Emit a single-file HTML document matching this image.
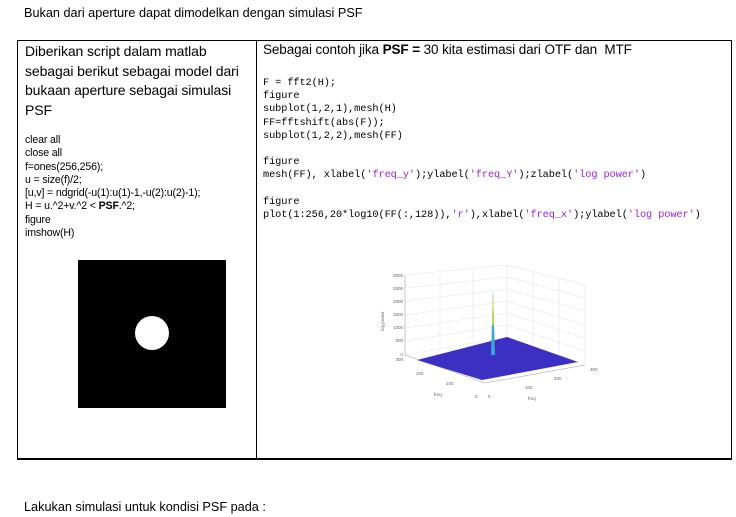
<!DOCTYPE html>
<html><head><meta charset="utf-8"><style>
body{margin:0;width:736px;height:517px;background:#fff;position:relative;font-family:"Liberation Sans",sans-serif;color:#000;overflow:hidden}
.a{position:absolute;white-space:nowrap}
.t{position:absolute;left:17px;top:40px;width:715px;height:420px;border:1px solid #000;box-sizing:border-box;border-bottom-width:2px}
.d{position:absolute;left:256px;top:40px;width:1px;height:420px;background:#000}
.m{font-family:"Liberation Mono",monospace;font-size:10.3px;line-height:13.2px;letter-spacing:-0.1px}
.s{color:#a020f0}
</style></head><body>
<div class="a" style="left:24px;top:6px;font-size:12.7px">Bukan dari aperture dapat dimodelkan dengan simulasi PSF</div>
<div class="t"></div><div class="d"></div>
<div class="a" style="left:25px;top:42px;font-size:14px;line-height:19.5px;letter-spacing:-0.1px">Diberikan script dalam matlab<br>sebagai berikut sebagai model dari<br>bukaan aperture sebagai simulasi<br>PSF</div>
<div class="a" style="left:25px;top:134px;font-size:10.6px;line-height:13.3px;letter-spacing:-0.15px">clear all<br>close all<br>f=ones(256,256);<br>u = size(f)/2;<br>[u,v] = ndgrid(-u(1):u(1)-1,-u(2):u(2)-1);<br>H = u.^2+v.^2 &lt; <b>PSF</b>.^2;<br>figure<br>imshow(H)</div>
<div class="a" style="left:78px;top:260px;width:148px;height:148px;background:#000"></div>
<div class="a" style="left:135px;top:316px;width:34px;height:34px;border-radius:50%;background:#fff"></div>
<div class="a" style="left:263px;top:42px;font-size:13.5px;letter-spacing:-0.1px">Sebagai contoh jika <b>PSF =</b> 30 kita estimasi dari OTF dan &nbsp;MTF</div>
<div class="a m" style="left:263px;top:77px">F = fft2(H);<br>figure<br>subplot(1,2,1),mesh(H)<br>FF=fftshift(abs(F));<br>subplot(1,2,2),mesh(FF)<br><br>figure<br>mesh(FF), xlabel(<span class="s">'freq_y'</span>);ylabel(<span class="s">'freq_Y'</span>);zlabel(<span class="s">'log power'</span>)<br><br>figure<br>plot(1:256,20*log10(FF(:,128)),<span class="s">'r'</span>),xlabel(<span class="s">'freq_x'</span>);ylabel(<span class="s">'log power'</span>)</div>
<svg class="a" style="left:360px;top:265px" width="250" height="150" font-family="Liberation Sans" font-size="4.5" fill="#666">
<g stroke="#e4e4e4" stroke-width="0.6" fill="none">
<polyline points="45,10 147,0 225,20 225,100 147,72 45,90 45,10"/>
<line x1="147" y1="0" x2="147" y2="72"/>
<line x1="80" y1="7" x2="80" y2="86"/><line x1="113" y1="3" x2="113" y2="78"/>
<line x1="173" y1="7" x2="173" y2="82"/><line x1="199" y1="14" x2="199" y2="91"/>
<line x1="45" y1="23" x2="147" y2="12"/><line x1="45" y1="36" x2="147" y2="24"/><line x1="45" y1="50" x2="147" y2="36"/><line x1="45" y1="63" x2="147" y2="48"/><line x1="45" y1="76" x2="147" y2="60"/>
<line x1="147" y1="12" x2="225" y2="33"/><line x1="147" y1="24" x2="225" y2="46"/><line x1="147" y1="36" x2="225" y2="60"/><line x1="147" y1="48" x2="225" y2="73"/><line x1="147" y1="60" x2="225" y2="86"/>
</g>
<g stroke="#999" stroke-width="0.5"><line x1="45" y1="10" x2="45" y2="90"/><line x1="45" y1="90" x2="125" y2="118"/><line x1="125" y1="118" x2="225" y2="100"/></g>
<polygon points="57,95 147,72 218,97 122,115" fill="#3b2fc4"/>
<polygon points="131,90 133,25 135,90" fill="#3aa7d8"/>
<polygon points="132,60 133,25 134,60" fill="#c8dc3a"/>
<g text-anchor="end"><text x="43" y="12">3000</text><text x="43" y="25">2500</text><text x="43" y="38">2000</text><text x="43" y="51">1500</text><text x="43" y="64">1000</text><text x="43" y="77">500</text><text x="43" y="91">0</text><text x="43" y="96">300</text></g>
<text x="56" y="110">200</text><text x="86" y="120">100</text><text x="115" y="133">0</text><text x="128" y="133">0</text><text x="165" y="124">100</text><text x="194" y="115">200</text><text x="230" y="106">300</text>
<text x="74" y="131">freq</text><text x="168" y="135">freq</text>
<text transform="translate(24,66) rotate(-90)">log power</text>
</svg>
<div class="a" style="left:24px;top:500px;font-size:12.7px">Lakukan simulasi untuk kondisi PSF pada :</div>
</body></html>
